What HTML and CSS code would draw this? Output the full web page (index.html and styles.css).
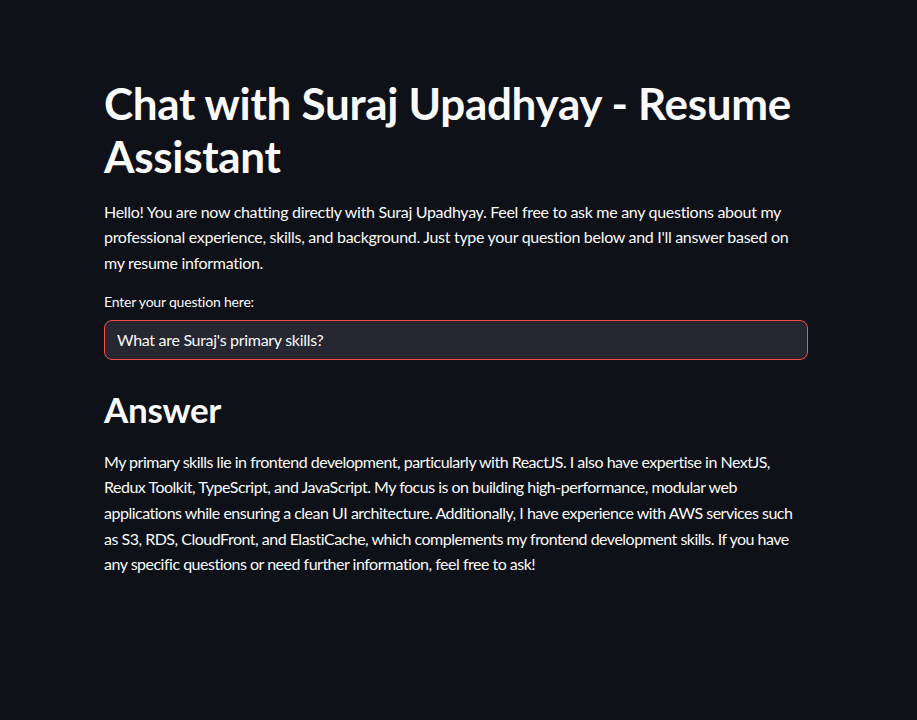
FILE: index.html
```html
<!DOCTYPE html>
<html lang="en">
<head>
<meta charset="utf-8">
<title>Chat with Suraj Upadhyay - Resume Assistant</title>
<link rel="stylesheet" href="styles.css">
</head>
<body>
<main class="main">
  <div class="block">
    <h1 class="title">Chat with Suraj Upadhyay - Resume Assistant</h1>
    <p class="text intro">Hello! You are now chatting directly with Suraj Upadhyay. Feel free to ask me any questions about my professional experience, skills, and background. Just type your question below and I'll answer based on my resume information.</p>
    <div class="field">
      <label class="label" for="q">Enter your question here:</label>
      <div class="input-wrap">
        <input id="q" class="input" type="text" value="What are Suraj's primary skills?">
      </div>
    </div>
    <h2 class="heading">Answer</h2>
    <p class="text answer">My primary skills lie in frontend development, particularly with ReactJS. I also have expertise in NextJS, Redux Toolkit, TypeScript, and JavaScript. My focus is on building high-performance, modular web applications while ensuring a clean UI architecture. Additionally, I have experience with AWS services such as S3, RDS, CloudFront, and ElastiCache, which complements my frontend development skills. If you have any specific questions or need further information, feel free to ask!</p>
  </div>
</main>
</body>
</html>
```

FILE: styles.css
```css
html, body {
  margin: 0;
  padding: 0;
  background: #0e1117;
  color: #fafafa;
  font-family: "Lato", "Open Sans", sans-serif;
  height: 100%;
}
.main {
  padding: 77px 0 40px 104px;
}
.block {
  width: 704px;
}
.title {
  font-size: 44px;
  font-weight: 700;
  line-height: 1.2;
  margin: 0 0 16px 0;
  letter-spacing: -0.3px;
}
.text {
  font-size: 16px;
  line-height: 1.6;
  margin: 0 0 16px 0;
}
.intro {
  letter-spacing: -0.3px;
}
.answer {
  letter-spacing: -0.5px;
}
.field {
  margin-bottom: 28px;
}
.label {
  display: block;
  font-size: 14px;
  line-height: 1.6;
  margin-bottom: 6px;
  letter-spacing: -0.2px;
}
.input-wrap {
  border: 1px solid #ff4b4b;
  border-radius: 8px;
  background: #262730;
  height: 38px;
  display: flex;
  align-items: center;
}
.input {
  flex: 1;
  background: transparent;
  border: 0;
  outline: none;
  color: #fafafa;
  font: inherit;
  font-size: 16px;
  letter-spacing: -0.3px;
  padding: 0 12px;
}
.heading {
  font-size: 35px;
  font-weight: 700;
  line-height: 1.2;
  margin: 2px 0 19px 0;
  letter-spacing: -0.3px;
}
```
